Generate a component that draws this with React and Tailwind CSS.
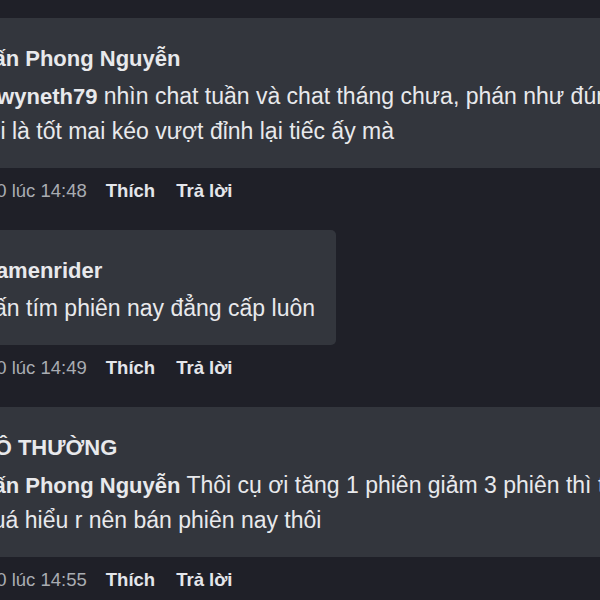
import React from "react";

const font = { fontFamily: '"Liberation Sans", Arial, sans-serif' };

function Meta({ time }) {
  return (
    <div className="mt-[11px] pl-[46px] flex items-baseline whitespace-nowrap text-[18.5px] leading-[24px]">
      <span className="text-[#a9acb2]">{time}</span>
      <span className="ml-[19px] font-bold text-[#e4e6eb]">Thích</span>
      <span className="ml-[21px] font-bold text-[#e4e6eb]">Trả lời</span>
    </div>
  );
}

export default function App() {
  return (
    <div className="w-[600px] h-[600px] overflow-hidden bg-[#1f2028]" style={font}>
      <div className="ml-[-60px] pt-[18px] flex flex-col items-start">
        {/* Bubble 1 */}
        <div className="w-[740px] rounded-[6px] bg-[#33363d] pl-[40px] pt-[24px] pb-[20px] whitespace-nowrap">
          <div className="text-[22px] leading-[34px] font-bold text-[#e8e9ec]">Tấn Phong Nguyễn</div>
          <div className="mt-[3px] text-[23px] leading-[34px] text-[#e8e9ec]">
            <div>
              <span className="font-bold text-[22px]">Gwyneth79</span> nhìn chat tuần và chat tháng chưa, phán như đúng rồi
            </div>
            <div>rồi là tốt mai kéo vượt đỉnh lại tiếc ấy mà</div>
          </div>
        </div>
        <Meta time="10 lúc 14:48" />

        {/* Bubble 2 */}
        <div className="mt-[27px] w-[396px] rounded-[5px] bg-[#33363d] pl-[40px] pt-[24px] pb-[20px] whitespace-nowrap">
          <div className="text-[22px] leading-[34px] font-bold text-[#e8e9ec]">Kamenrider</div>
          <div className="mt-[3px] text-[23px] leading-[34px] text-[#e8e9ec]">Tấn tím phiên nay đẳng cấp luôn</div>
        </div>
        <Meta time="10 lúc 14:49" />

        {/* Bubble 3 */}
        <div className="mt-[27px] w-[740px] rounded-[6px] bg-[#33363d] pl-[40px] pt-[24px] pb-[20px] whitespace-nowrap">
          <div className="text-[22px] leading-[34px] font-bold text-[#e8e9ec]">VÔ THƯỜNG</div>
          <div className="mt-[3px] text-[23px] leading-[34px] text-[#e8e9ec]">
            <div>
              <span className="font-bold text-[22px]">Tấn Phong Nguyễn</span> Thôi cụ ơi tăng 1 phiên giảm 3 phiên thì tôi
            </div>
            <div>quá hiểu r nên bán phiên nay thôi</div>
          </div>
        </div>
        <Meta time="10 lúc 14:55" />
      </div>
    </div>
  );
}
